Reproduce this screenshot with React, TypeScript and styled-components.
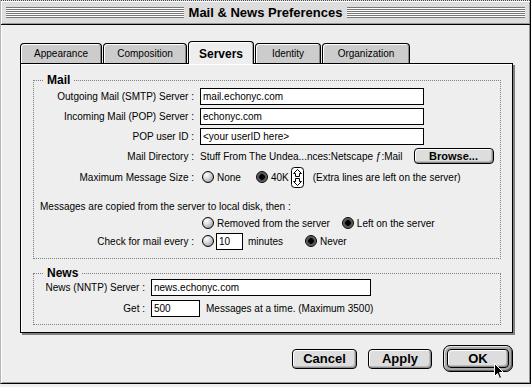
import React from 'react'
import styled, { createGlobalStyle, css } from 'styled-components'

const GlobalStyle = createGlobalStyle`
  html, body {
    margin: 0;
    padding: 0;
    background: #eeeeee;
  }
  body {
    font-family: "Liberation Sans", Arial, sans-serif;
    font-size: 10px;
    color: #000000;
  }
`

const SANS = `"Liberation Sans", Arial, sans-serif`

const Window = styled.div`
  position: relative;
  box-sizing: border-box;
  width: 531px;
  height: 384px;
  display: flex;
  flex-direction: column;
  background: #eeeeee;
  border-left: 1px solid #b4b4b4;
  border-right: 1px solid #000000;
  border-bottom: 1px solid #000000;
  box-shadow: inset -1px -1px 0 #999999;
`

const TitleBar = styled.div`
  box-sizing: border-box;
  flex: none;
  height: 25px;
  display: flex;
  align-items: center;
  gap: 3px;
  padding: 0 5px;
  background: #dddddd;
  border-top: 1px dotted #444444;
  border-bottom: 1px solid #000000;
  box-shadow: inset 1px 1px 0 #ffffff, inset -1px -1px 0 #999999;
`

const Stripes = styled.div`
  flex: 1;
  height: 11px;
  background: repeating-linear-gradient(to bottom, #777777 0 1px, #ffffff 1px 2px);
`

const Title = styled.div`
  padding: 0 2px;
  font: bold 13px/16px ${SANS};
  white-space: nowrap;
`

const Body = styled.div`
  flex: 1;
  display: flex;
  flex-direction: column;
  padding: 16px 0 0 19px;
  box-shadow: inset 1px 0 0 #ffffff;
`

const TabRow = styled.div`
  position: relative;
  z-index: 1;
  display: flex;
  align-items: flex-end;
  gap: 1px;
  height: 22px;
`

const Tab = styled.div<{ $w: number; $active?: boolean }>`
  box-sizing: border-box;
  width: ${p => p.$w}px;
  height: 20px;
  display: flex;
  align-items: center;
  justify-content: center;
  border: 1px solid #000000;
  border-bottom: none;
  border-radius: 4px 4px 0 0;
  background: #cccccc;
  box-shadow: inset 1px 1px 0 #ffffff, inset -1px 0 0 #888888;
  font-size: 10px;

  ${p =>
    p.$active &&
    css`
      height: 23px;
      margin-bottom: -1px;
      padding-top: 2px;
      background: #eeeeee;
      box-shadow: inset 1px 1px 0 #ffffff, inset -1px 0 0 #aaaaaa;
      font: bold 12px ${SANS};
    `}
`

const Panel = styled.div`
  box-sizing: border-box;
  width: 493px;
  height: 270px;
  display: flex;
  flex-direction: column;
  gap: 8px;
  padding: 10px 11px 0 12px;
  background: #eeeeee;
  border: 1px solid #000000;
  box-shadow: 2px 2px 0 #808080, inset 1px 1px 0 #ffffff;
`

const Group = styled.fieldset<{ $pb: number }>`
  margin: 0;
  padding: 0 0 ${p => p.$pb}px 6px;
  min-inline-size: 0;
  border: 1px dotted #808080;
`

const Legend = styled.legend`
  margin-left: 4px;
  padding: 0 3px;
  font: bold 12px/12px ${SANS};
`

const Row = styled.div<{ $h: number; $mt: number }>`
  display: flex;
  align-items: center;
  height: ${p => p.$h}px;
  margin-top: ${p => p.$mt}px;
  white-space: nowrap;
`

const Label = styled.span<{ $w: number }>`
  flex: none;
  width: ${p => p.$w}px;
  margin-right: 6px;
  text-align: right;
`

const Field = styled.input<{ $w: number; $ml?: number }>`
  box-sizing: border-box;
  width: ${p => p.$w}px;
  height: 17px;
  margin: 0 0 0 ${p => p.$ml ?? 0}px;
  padding: 0 2px;
  border: 1px solid #000000;
  border-radius: 0;
  background: #ffffff;
  font: 10px ${SANS};
  color: #000000;
  outline: none;
`

const Text = styled.span<{ $ml?: number }>`
  margin-left: ${p => p.$ml ?? 0}px;
`

const Choice = styled.span<{ $ml?: number }>`
  display: flex;
  align-items: center;
  gap: 3px;
  margin-left: ${p => p.$ml ?? 0}px;
`

const Radio = styled.span<{ $on?: boolean }>`
  box-sizing: border-box;
  flex: none;
  width: 12px;
  height: 12px;
  border: 1px solid #000000;
  border-radius: 50%;
  background: radial-gradient(circle at 35% 30%, #ffffff 0, #dddddd 35%, #888888 100%);

  ${p =>
    p.$on &&
    css`
      background: radial-gradient(circle at 50% 50%, #000000 0 2.5px, #444444 3px, #9a9a9a 100%);
    `}
`

const StepperBox = styled.span`
  display: flex;
  margin-left: 2px;
`

const PushButton = styled.button<{ $w: number; $h: number; $size: number; $ml?: number }>`
  box-sizing: border-box;
  width: ${p => p.$w}px;
  height: ${p => p.$h}px;
  margin: 0 0 0 ${p => p.$ml ?? 0}px;
  padding: 0;
  border: 1px solid #000000;
  border-radius: 4px;
  background: #dddddd;
  box-shadow: inset 1px 1px 0 #ffffff, inset -1px -1px 0 #8c8c8c, inset -2px -2px 0 #bbbbbb;
  font: bold ${p => p.$size}px ${SANS};
  color: #000000;
`

const ButtonRow = styled.div`
  display: flex;
  align-items: center;
  justify-content: flex-end;
  gap: 11px;
  width: 493px;
  margin-top: 12px;
`

const DefaultRing = styled.div`
  box-sizing: border-box;
  display: flex;
  width: 70px;
  height: 27px;
  padding: 3px;
  border: 1px solid #000000;
  border-radius: 7px;
  background: #a8a8a8;
  box-shadow: inset 1px 1px 0 #e4e4e4, inset -1px -1px 0 #666666;
`

const Cursor = styled.svg`
  position: absolute;
  left: 492px;
  top: 362px;
`

const Stepper = () => (
  <StepperBox>
    <svg width="13" height="21" viewBox="0 0 13 21">
      <rect x="0.5" y="0.5" width="12" height="20" rx="3" fill="#ffffff" stroke="#000000" />
      <path d="M6.5 2.5 L10.5 6.5 L8.5 6.5 L8.5 9.5 L4.5 9.5 L4.5 6.5 L2.5 6.5 Z" fill="none" stroke="#000000" />
      <path d="M6.5 18.5 L10.5 14.5 L8.5 14.5 L8.5 11.5 L4.5 11.5 L4.5 14.5 L2.5 14.5 Z" fill="none" stroke="#000000" />
    </svg>
  </StepperBox>
)

const tabs = [
  { name: 'Appearance', w: 82 },
  { name: 'Composition', w: 84 },
  { name: 'Servers', w: 66, active: true },
  { name: 'Identity', w: 66 },
  { name: 'Organization', w: 88 },
]

const App = () => (
  <>
    <GlobalStyle />
    <Window>
      <TitleBar>
        <Stripes />
        <Title>Mail &amp; News Preferences</Title>
        <Stripes />
      </TitleBar>
      <Body>
        <TabRow>
          {tabs.map(t => (
            <Tab key={t.name} $w={t.w} $active={t.active}>
              {t.name}
            </Tab>
          ))}
        </TabRow>
        <Panel>
          <Group $pb={9}>
            <Legend>Mail</Legend>
            <Row $h={17} $mt={2}>
              <Label $w={154}>Outgoing Mail (SMTP) Server :</Label>
              <Field $w={224} defaultValue="mail.echonyc.com" readOnly />
            </Row>
            <Row $h={17} $mt={3}>
              <Label $w={154}>Incoming Mail (POP) Server :</Label>
              <Field $w={224} defaultValue="echonyc.com" readOnly />
            </Row>
            <Row $h={17} $mt={3}>
              <Label $w={154}>POP user ID :</Label>
              <Field $w={224} defaultValue="<your userID here>" readOnly />
            </Row>
            <Row $h={16} $mt={3}>
              <Label $w={154}>Mail Directory :</Label>
              <Text>Stuff From The Undea...nces:Netscape ƒ:Mail</Text>
              <PushButton $w={80} $h={16} $size={11} $ml={11}>
                Browse...
              </PushButton>
            </Row>
            <Row $h={20} $mt={3}>
              <Label $w={154}>Maximum Message Size :</Label>
              <Choice $ml={2}>
                <Radio />
                None
              </Choice>
              <Choice $ml={15}>
                <Radio $on />
                40K
              </Choice>
              <Stepper />
              <Text $ml={9}>(Extra lines are left on the server)</Text>
            </Row>
            <Row $h={14} $mt={12}>
              <Text>Messages are copied from the server to local disk, then :</Text>
            </Row>
            <Row $h={14} $mt={3}>
              <Label $w={154} />
              <Choice $ml={2}>
                <Radio />
                Removed from the server
              </Choice>
              <Choice $ml={12}>
                <Radio $on />
                Left on the server
              </Choice>
            </Row>
            <Row $h={16} $mt={3}>
              <Label $w={154}>Check for mail every :</Label>
              <Choice $ml={2}>
                <Radio />
              </Choice>
              <Field $w={27} $ml={2} defaultValue="10" readOnly />
              <Text $ml={5}>minutes</Text>
              <Choice $ml={22}>
                <Radio $on />
                Never
              </Choice>
            </Row>
          </Group>
          <Group $pb={7}>
            <Legend>News</Legend>
            <Row $h={16} $mt={0}>
              <Label $w={105}>News (NNTP) Server :</Label>
              <Field $w={220} defaultValue="news.echonyc.com" readOnly />
            </Row>
            <Row $h={17} $mt={5}>
              <Label $w={105}>Get :</Label>
              <Field $w={49} defaultValue="500" readOnly />
              <Text $ml={6}>Messages at a time. (Maximum 3500)</Text>
            </Row>
          </Group>
        </Panel>
        <ButtonRow>
          <PushButton $w={65} $h={20} $size={13}>
            Cancel
          </PushButton>
          <PushButton $w={64} $h={20} $size={13}>
            Apply
          </PushButton>
          <DefaultRing>
            <PushButton $w={62} $h={19} $size={13}>
              OK
            </PushButton>
          </DefaultRing>
        </ButtonRow>
      </Body>
      <Cursor width="12" height="18" viewBox="0 0 12 18">
        <path d="M1.5 1.5 L1.5 14.5 L4.5 11.5 L6.5 16.5 L8.5 15.5 L6.5 10.5 L10.5 10.5 Z" fill="#000000" stroke="#ffffff" />
      </Cursor>
    </Window>
  </>
)

export default App
